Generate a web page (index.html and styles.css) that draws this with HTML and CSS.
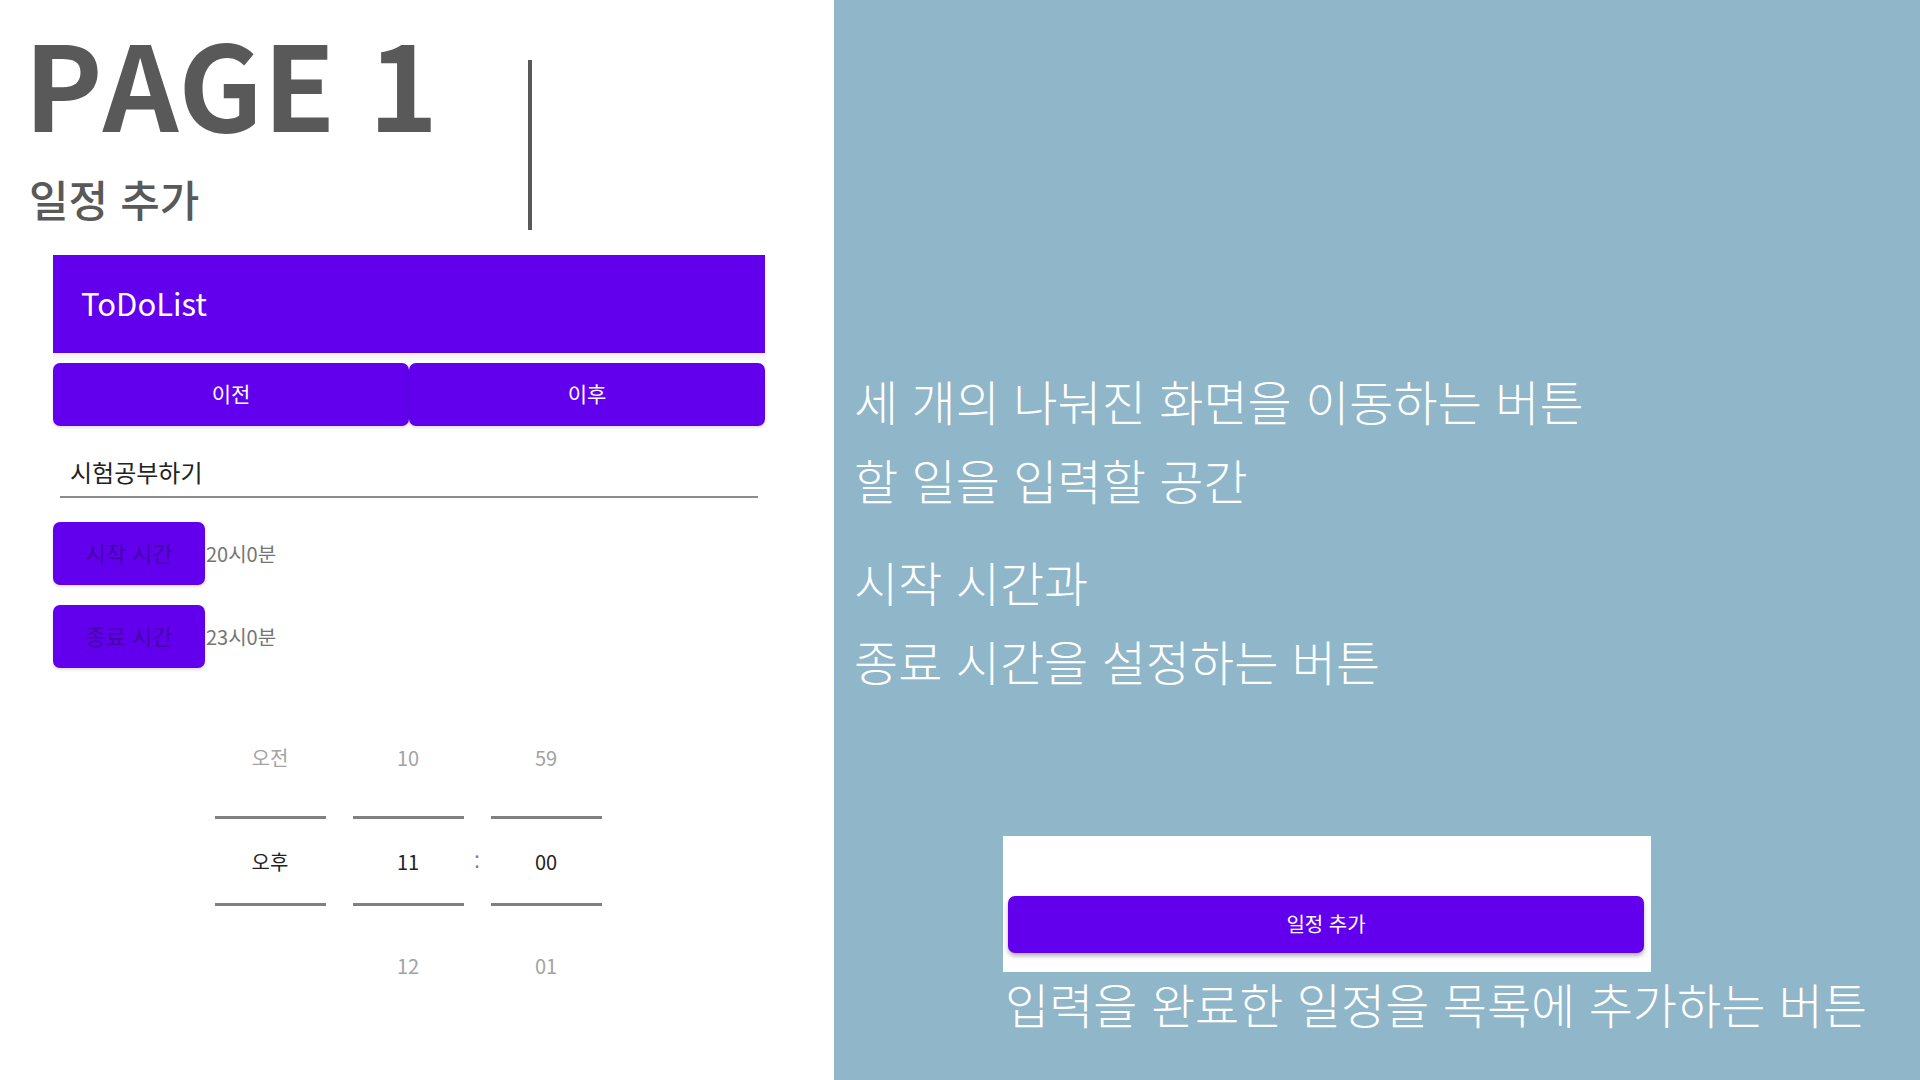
FILE: index.html
```html
<!DOCTYPE html>
<html lang="ko">
<head>
<meta charset="utf-8">
<meta name="viewport" content="width=device-width, initial-scale=1">
<title>PAGE 1 - 일정 추가</title>
<link rel="stylesheet" href="styles.css">
</head>
<body>
<main class="slide">
  <section class="demo">
    <header class="heading">
      <div class="heading-text">
        <h1 class="title">PAGE 1</h1>
        <p class="subtitle">일정 추가</p>
      </div>
      <div class="divider"></div>
    </header>
    <div class="app">
      <h2 class="app-bar">ToDoList</h2>
      <nav class="tabs">
        <button class="btn" type="button">이전</button>
        <button class="btn" type="button">이후</button>
      </nav>
      <input class="task" type="text" value="시험공부하기" aria-label="할 일">
      <div class="time-row">
        <button class="btn btn-time" type="button">시작 시간</button>
        <span class="time">20시0분</span>
      </div>
      <div class="time-row">
        <button class="btn btn-time" type="button">종료 시간</button>
        <span class="time">23시0분</span>
      </div>
      <div class="picker">
        <div class="wheel">
          <button class="step" type="button">오전</button>
          <input class="current" type="text" value="오후" aria-label="오전 또는 오후">
        </div>
        <div class="wheel">
          <button class="step" type="button">10</button>
          <input class="current" type="text" value="11" aria-label="시">
          <button class="step" type="button">12</button>
        </div>
        <span class="colon">:</span>
        <div class="wheel">
          <button class="step" type="button">59</button>
          <input class="current" type="text" value="00" aria-label="분">
          <button class="step" type="button">01</button>
        </div>
      </div>
    </div>
  </section>
  <section class="notes">
    <p class="note">세 개의 나눠진 화면을 이동하는 버튼</p>
    <p class="note">할 일을 입력할 공간</p>
    <p class="note note-group">시작 시간과<br>종료 시간을 설정하는 버튼</p>
    <div class="submit">
      <div class="card">
        <button class="btn btn-add" type="button">일정 추가</button>
      </div>
      <p class="note">입력을 완료한 일정을 목록에 추가하는 버튼</p>
    </div>
  </section>
</main>
</body>
</html>
```
FILE: styles.css
```css
* {
  box-sizing: border-box;
}

body {
  margin: 0;
  font-family: "Noto Sans CJK KR", sans-serif;
  background: #fff;
}

h1,
h2,
p {
  margin: 0;
}

button,
input {
  font-family: inherit;
  border: 0;
  padding: 0;
}

.slide {
  display: grid;
  grid-template-columns: 834fr 1086fr;
  min-height: 100vh;
}

.demo {
  padding: 20px 69px 0 53px;
}

.heading {
  display: flex;
  gap: 90px;
  height: 235px;
  margin-left: -29px;
  color: #595959;
}

.title {
  font-size: 118px;
  font-weight: 700;
  font-kerning: none;
  line-height: 122px;
  white-space: nowrap;
}

.subtitle {
  margin-top: 26px;
  padding-left: 5px;
  font-size: 43px;
  font-weight: 500;
  line-height: 60px;
}

.divider {
  width: 4px;
  height: 170px;
  margin-top: 40px;
  background: #595959;
}

.app {
  display: flex;
  flex-direction: column;
}

.app-bar {
  padding: 0 0 2px 28px;
  background: #6200ee;
  color: #fff;
  font-size: 31px;
  font-weight: 400;
  line-height: 96px;
}

.tabs {
  display: flex;
  padding-top: 10px;
  background: linear-gradient(#f0f0f0, #fff 10px);
}

.btn {
  height: 63px;
  padding-bottom: 4px;
  border-radius: 7px;
  background: #6200ee;
  box-shadow: 0 2px 3px #0000001f;
  color: #fff;
  font-size: 21px;
  font-weight: 400;
}

.tabs .btn {
  flex: 1;
}

.task {
  height: 54px;
  margin: 18px 7px 24px;
  padding: 2px 10px 0;
  border-bottom: 2px solid #8c8c8c;
  background: none;
  color: #222;
  font-size: 24px;
  font-weight: 400;
}

.time-row {
  display: flex;
  align-items: center;
  margin-bottom: 20px;
}

.btn-time {
  width: 152px;
  color: #4600a8;
  font-size: 22px;
}

.time {
  padding-left: 1px;
  color: #757575;
  font-size: 20px;
  font-weight: 400;
}

.picker {
  display: flex;
  justify-content: center;
  margin-top: 15px;
  padding-right: 2px;
}

.wheel {
  display: flex;
  flex-direction: column;
  width: 111px;
}

.wheel + .wheel {
  margin-left: 27px;
}

.step {
  height: 113px;
  padding-bottom: 4px;
  background: none;
  color: #a3a3a3;
  font-size: 20px;
  font-weight: 400;
}

.current + .step {
  padding: 6px 0 0;
}

.current {
  width: 100%;
  height: 90px;
  border: solid #808080;
  border-width: 3px 0;
  background: none;
  color: #222;
  font-size: 20px;
  text-align: center;
}

.colon {
  width: 27px;
  align-self: center;
  color: #808080;
  font-size: 20px;
  text-align: center;
}

.notes {
  padding: 361px 0 0 20px;
  background: #8fb6c9;
}

.note {
  color: #fff;
  font-size: 48px;
  font-weight: 300;
  line-height: 79px;
  white-space: nowrap;
}

.note-group {
  margin-top: 23px;
}

.submit {
  margin: 136px 0 0 149px;
}

.card {
  width: 648px;
  max-width: 100%;
  padding: 60px 7px 19px 5px;
  background: #fff;
}

.btn-add {
  display: block;
  width: 100%;
  height: 57px;
  padding-bottom: 2px;
  box-shadow: 0 3px 4px #0000004d;
  font-size: 20px;
}

.submit .note {
  padding-left: 2px;
  line-height: 62px;
}
```
